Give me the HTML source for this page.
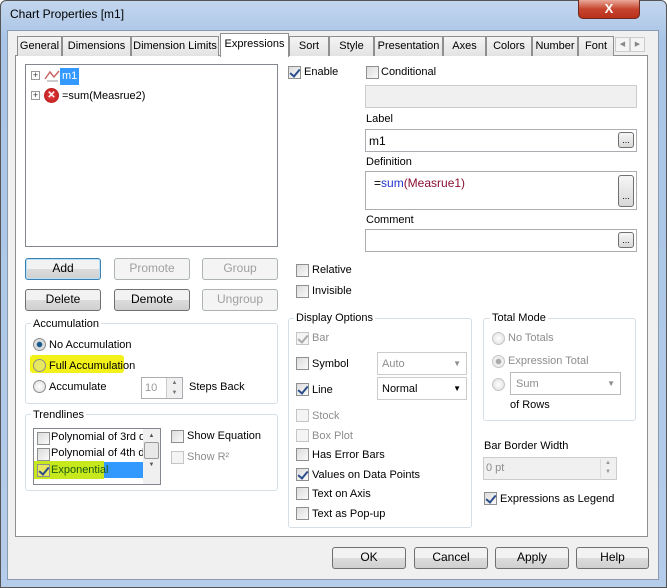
<!DOCTYPE html><html><head><style>
*{box-sizing:border-box;margin:0;padding:0}
body{width:667px;height:588px;overflow:hidden;background:#fff;font:11px "Liberation Sans",sans-serif;color:#000;position:relative}
.a{position:absolute;white-space:nowrap}
.win{left:0;top:0;width:667px;height:588px;background:linear-gradient(#c3d6ee,#a9c4e6 40px,#b5cdea);border:1px solid #555;border-radius:6px 6px 0 0}
.client{left:7px;top:30px;width:652px;height:550px;background:#f0f0f0;border:1px solid #8a9ab0}
.panel{left:15px;top:55px;width:633px;height:482px;background:#fff;border:1px solid #8e8f8f}
.tab{top:36px;height:20px;border:1px solid #8e8f8f;border-bottom:none;background:linear-gradient(#f4f4f4,#e3e3e3);text-align:center;line-height:19px;font-size:11px}
.tab.sel{top:33px;height:24px;background:#fff;z-index:2;line-height:20px}
.box{border:1px solid #abadb3;background:#fff}
.btn{border:1px solid #707070;border-radius:3px;background:linear-gradient(#f2f2f2 50%,#dcdcdc 50%,#d0d0d0);text-align:center;line-height:19px;font-size:12px}
.btn.dis{border-color:#adb2b5;background:#f4f4f4;color:#a0a0a0}
.grp{border:1px solid #d5dfe5;border-radius:3px}
.gl{background:#fff;padding:0 2px}
.cb{width:13px;height:13px;border:1px solid #8e8f8f;background:linear-gradient(135deg,#dcdcdc,#fafafa)}
.cb.dis{border-color:#c5c5c5;background:#f4f4f4}
.ck::after{content:"";position:absolute;left:3px;top:0px;width:4px;height:8px;border:solid #2b4d8a;border-width:0 2px 2px 0;transform:rotate(40deg)}
.ck.dis::after{border-color:#aaa}
.rb{width:13px;height:13px;border-radius:50%;border:1px solid #8e8f8f;background:radial-gradient(#fff,#dcdcdc)}
.dim{color:#8d8d8d}
.dots{width:16px;height:16px;border:1px solid #707070;border-radius:3px;background:linear-gradient(#f6f6f6,#d8d8d8);font-size:9px;text-align:center;line-height:14px}
</style></head><body>
<div class="a win"></div>
<div class="a" style="left:10px;top:7px;font-size:12px">Chart Properties [m1]</div>
<div class="a" style="left:578px;top:0;width:62px;height:19px;border:1px solid #6b2a1f;border-top:none;border-radius:0 0 5px 5px;background:linear-gradient(#e9a99a,#c7452e 50%,#b8301b);color:#fff;font-weight:bold;text-align:center;line-height:17px;font-size:13px">X</div>
<div class="a client"></div>
<div class="a panel"></div>
<div class="a tab" style="left:17px;width:45px">General</div>
<div class="a tab" style="left:62px;width:69px">Dimensions</div>
<div class="a tab" style="left:131px;width:88px">Dimension Limits</div>
<div class="a tab sel" style="left:220px;width:69px">Expressions</div>
<div class="a tab" style="left:289px;width:40px">Sort</div>
<div class="a tab" style="left:329px;width:45px">Style</div>
<div class="a tab" style="left:374px;width:69px">Presentation</div>
<div class="a tab" style="left:443px;width:43px">Axes</div>
<div class="a tab" style="left:486px;width:46px">Colors</div>
<div class="a tab" style="left:532px;width:46px">Number</div>
<div class="a tab" style="left:578px;width:36px">Font</div>
<div class="a" style="left:615px;top:37px;width:15px;height:15px;border:1px solid #ccc;background:#f4f4f4;font-size:7px;color:#888;text-align:center;line-height:13px">◀</div>
<div class="a" style="left:630px;top:37px;width:15px;height:15px;border:1px solid #ccc;background:#f4f4f4;font-size:7px;color:#888;text-align:center;line-height:13px">▶</div>

<div class="a box" style="left:25px;top:64px;width:253px;height:183px;border-color:#828790"></div>
<div class="a" style="left:31px;top:71px;width:9px;height:9px;border:1px solid #999;font-size:9px;line-height:7px;text-align:center;color:#333">+</div>
<div class="a" style="left:31px;top:91px;width:9px;height:9px;border:1px solid #999;font-size:9px;line-height:7px;text-align:center;color:#333">+</div>
<svg class="a" style="left:44px;top:68px" width="16" height="14"><path d="M1 11 L6 4 L10 9 L15 3" stroke="#c66" fill="none" stroke-width="1.5"/><path d="M3 13 L14 13" stroke="#999"/></svg>
<div class="a" style="left:60px;top:68px;width:19px;height:17px;background:#3399ff;color:#fff;padding-left:2px;line-height:17px">m1</div>
<div class="a" style="left:44px;top:88px;width:15px;height:15px;border-radius:50%;background:radial-gradient(#e44,#a11);color:#fff;font-weight:bold;font-size:10px;text-align:center;line-height:15px">✕</div>
<div class="a" style="left:62px;top:90px">=sum(Measrue2)</div>

<div class="a btn" style="left:25px;top:258px;width:76px;height:22px;border-color:#3c7fb1;box-shadow:inset 0 0 0 1px #b8e0f8">Add</div>
<div class="a btn dis" style="left:114px;top:258px;width:76px;height:22px">Promote</div>
<div class="a btn dis" style="left:202px;top:258px;width:76px;height:22px">Group</div>
<div class="a btn" style="left:25px;top:289px;width:76px;height:22px">Delete</div>
<div class="a btn" style="left:114px;top:289px;width:76px;height:22px">Demote</div>
<div class="a btn dis" style="left:202px;top:289px;width:76px;height:22px">Ungroup</div>

<div class="a grp" style="left:25px;top:323px;width:253px;height:81px"></div>
<div class="a gl" style="left:31px;top:318px">Accumulation</div>
<div class="a rb" style="left:33px;top:338px;background:radial-gradient(#1b5a8c 30%,#dcdcdc 40%)"></div>
<div class="a" style="left:49px;top:339px">No Accumulation</div>
<div class="a" style="left:30px;top:355px;width:94px;height:18px;background:#f2f21a;border-radius:3px"></div>
<div class="a rb" style="left:33px;top:359px;background:#e8e860"></div>
<div class="a" style="left:49px;top:360px">Full Accumulation</div>
<div class="a rb" style="left:33px;top:380px"></div>
<div class="a" style="left:49px;top:381px">Accumulate</div>
<div class="a box" style="left:141px;top:377px;width:42px;height:22px;color:#999;padding:4px 0 0 3px">10</div>
<div class="a" style="left:166px;top:378px;width:16px;height:20px;border-left:1px solid #ccc;background:#f0f0f0;font-size:6px;color:#777;text-align:center;line-height:10px">▲<br>▼</div>
<div class="a" style="left:189px;top:381px">Steps Back</div>

<div class="a grp" style="left:25px;top:414px;width:253px;height:77px"></div>
<div class="a gl" style="left:31px;top:409px">Trendlines</div>
<div class="a box" style="left:33px;top:428px;width:128px;height:57px;border-color:#828790;overflow:hidden"></div>
<div class="a cb" style="left:37px;top:432px"></div><div class="a" style="left:51px;top:431px;width:92px;overflow:hidden">Polynomial of 3rd degree</div>
<div class="a cb" style="left:37px;top:448px"></div><div class="a" style="left:51px;top:447px;width:92px;overflow:hidden">Polynomial of 4th degree</div>
<div class="a" style="left:50px;top:462px;width:93px;height:16px;background:#3399ff"></div>
<div class="a" style="left:34px;top:461px;width:70px;height:18px;background:#c8e81e"></div>
<div class="a cb ck" style="left:37px;top:464px;background:#e8e860"></div><div class="a" style="left:51px;top:464px;color:#1a5a10">Exponential</div>
<div class="a" style="left:143px;top:429px;width:17px;height:55px;background:#f0f0f0;font-size:6px;color:#555;text-align:center"><div style="margin-top:4px">▲</div><div style="margin:3px 1px;height:17px;border:1px solid #999;border-radius:2px;background:#e8e8e8"></div><div>▼</div></div>
<div class="a cb" style="left:171px;top:430px"></div><div class="a" style="left:187px;top:430px">Show Equation</div>
<div class="a cb dis" style="left:171px;top:451px"></div><div class="a dim" style="left:187px;top:451px">Show R²</div>

<div class="a cb ck" style="left:288px;top:66px"></div><div class="a" style="left:304px;top:66px">Enable</div>
<div class="a cb" style="left:366px;top:66px"></div><div class="a" style="left:381px;top:66px">Conditional</div>
<div class="a box" style="left:365px;top:85px;width:272px;height:23px;background:#f0f0f0;border-color:#ccc"></div>
<div class="a" style="left:366px;top:113px">Label</div>
<div class="a box" style="left:365px;top:129px;width:272px;height:23px;padding:4px 3px;font-size:12px">m1</div>
<div class="a dots" style="left:618px;top:132px">...</div>
<div class="a" style="left:366px;top:156px">Definition</div>
<div class="a box" style="left:365px;top:171px;width:272px;height:39px;padding:4px 8px;font-size:12px">=<span style="color:#2233cc">sum</span><span style="color:#881133">(Measrue1)</span></div>
<div class="a dots" style="left:618px;top:175px;height:32px;line-height:40px">...</div>
<div class="a" style="left:366px;top:214px">Comment</div>
<div class="a box" style="left:365px;top:229px;width:272px;height:23px"></div>
<div class="a dots" style="left:618px;top:232px">...</div>
<div class="a cb" style="left:296px;top:264px"></div><div class="a" style="left:312px;top:264px">Relative</div>
<div class="a cb" style="left:296px;top:285px"></div><div class="a" style="left:312px;top:285px">Invisible</div>

<div class="a grp" style="left:288px;top:318px;width:184px;height:210px"></div>
<div class="a gl" style="left:294px;top:312px">Display Options</div>
<div class="a cb dis ck" style="left:296px;top:332px"></div><div class="a dim" style="left:312px;top:332px">Bar</div>
<div class="a cb" style="left:296px;top:357px"></div><div class="a" style="left:312px;top:358px">Symbol</div>
<div class="a box" style="left:377px;top:352px;width:90px;height:23px;border-color:#ccc;color:#8d8d8d;padding:5px 4px">Auto<span style="position:absolute;right:5px;font-size:8px;top:6px">▼</span></div>
<div class="a cb ck" style="left:296px;top:383px"></div><div class="a" style="left:312px;top:384px">Line</div>
<div class="a box" style="left:377px;top:377px;width:90px;height:23px;border-color:#ccc;padding:5px 4px">Normal<span style="position:absolute;right:5px;font-size:8px;top:6px">▼</span></div>
<div class="a cb dis" style="left:296px;top:409px"></div><div class="a dim" style="left:312px;top:410px">Stock</div>
<div class="a cb dis" style="left:296px;top:429px"></div><div class="a dim" style="left:312px;top:430px">Box Plot</div>
<div class="a cb" style="left:296px;top:448px"></div><div class="a" style="left:312px;top:449px">Has Error Bars</div>
<div class="a cb ck" style="left:296px;top:468px"></div><div class="a" style="left:312px;top:469px">Values on Data Points</div>
<div class="a cb" style="left:296px;top:487px"></div><div class="a" style="left:312px;top:488px">Text on Axis</div>
<div class="a cb" style="left:296px;top:507px"></div><div class="a" style="left:312px;top:508px">Text as Pop-up</div>

<div class="a grp" style="left:483px;top:318px;width:153px;height:103px"></div>
<div class="a gl" style="left:490px;top:312px">Total Mode</div>
<div class="a rb" style="left:492px;top:332px;border-color:#c5c5c5"></div><div class="a dim" style="left:508px;top:332px">No Totals</div>
<div class="a rb" style="left:492px;top:355px;border-color:#c5c5c5;background:radial-gradient(#aaa 30%,#eee 40%)"></div><div class="a dim" style="left:508px;top:355px">Expression Total</div>
<div class="a rb" style="left:492px;top:378px;border-color:#c5c5c5"></div>
<div class="a box" style="left:510px;top:372px;width:111px;height:23px;border-color:#bbb;color:#8d8d8d;padding:5px 5px">Sum<span style="position:absolute;right:5px;font-size:8px;top:6px">▼</span></div>
<div class="a" style="left:510px;top:399px">of Rows</div>
<div class="a" style="left:484px;top:440px">Bar Border Width</div>
<div class="a box" style="left:483px;top:457px;width:134px;height:23px;background:#f0f0f0;border-color:#ccc;color:#8d8d8d;padding:4px 2px">0 pt</div>
<div class="a" style="left:600px;top:459px;width:15px;height:19px;font-size:6px;color:#999;text-align:center;line-height:9px;border-left:1px solid #ddd">▲<br>▼</div>
<div class="a cb ck" style="left:484px;top:492px"></div><div class="a" style="left:500px;top:493px">Expressions as Legend</div>

<div class="a btn" style="left:332px;top:547px;width:74px;height:22px">OK</div>
<div class="a btn" style="left:414px;top:547px;width:74px;height:22px">Cancel</div>
<div class="a btn" style="left:495px;top:547px;width:74px;height:22px">Apply</div>
<div class="a btn" style="left:576px;top:547px;width:73px;height:22px">Help</div>
</body></html>
